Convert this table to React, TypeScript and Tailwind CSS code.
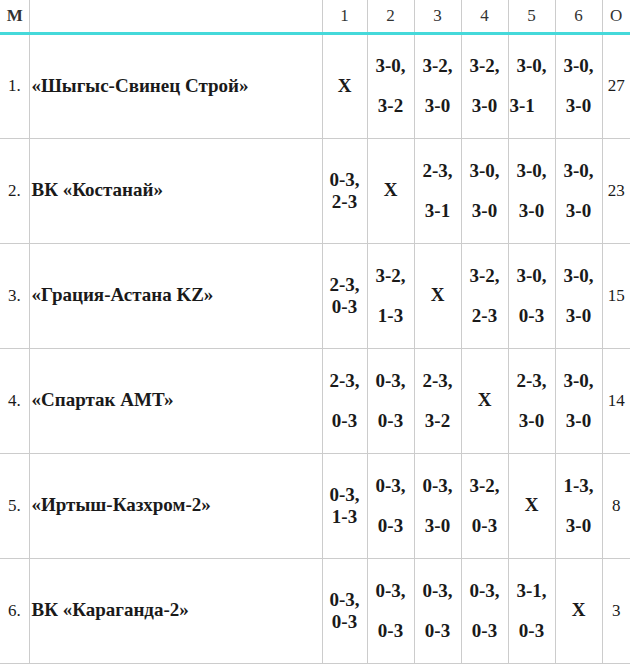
type Score = { top: string; bottom?: string; tight?: boolean; leftBottom?: boolean };

interface Team {
  n: number;
  name: string;
  cells: (Score | null)[];
  points: number;
}

const sp = (top: string, bottom: string): Score => ({ top, bottom });
const tt = (top: string, bottom: string): Score => ({ top, bottom, tight: true });

const teams: Team[] = [
  {
    n: 1,
    name: '«Шыгыс-Свинец Строй»',
    cells: [null, sp('3-0,', '3-2'), sp('3-2,', '3-0'), sp('3-2,', '3-0'), { top: '3-0,', bottom: '3-1', leftBottom: true }, sp('3-0,', '3-0')],
    points: 27,
  },
  {
    n: 2,
    name: 'ВК «Костанай»',
    cells: [tt('0-3,', '2-3'), null, sp('2-3,', '3-1'), sp('3-0,', '3-0'), sp('3-0,', '3-0'), sp('3-0,', '3-0')],
    points: 23,
  },
  {
    n: 3,
    name: '«Грация-Астана KZ»',
    cells: [tt('2-3,', '0-3'), sp('3-2,', '1-3'), null, sp('3-2,', '2-3'), sp('3-0,', '0-3'), sp('3-0,', '3-0')],
    points: 15,
  },
  {
    n: 4,
    name: '«Спартак АМТ»',
    cells: [sp('2-3,', '0-3'), sp('0-3,', '0-3'), sp('2-3,', '3-2'), null, sp('2-3,', '3-0'), sp('3-0,', '3-0')],
    points: 14,
  },
  {
    n: 5,
    name: '«Иртыш-Казхром-2»',
    cells: [tt('0-3,', '1-3'), sp('0-3,', '0-3'), sp('0-3,', '3-0'), sp('3-2,', '0-3'), null, sp('1-3,', '3-0')],
    points: 8,
  },
  {
    n: 6,
    name: 'ВК «Караганда-2»',
    cells: [tt('0-3,', '0-3'), sp('0-3,', '0-3'), sp('0-3,', '0-3'), sp('0-3,', '0-3'), sp('3-1,', '0-3'), null],
    points: 3,
  },
];

function ScoreCell({ score }: { score: Score | null }) {
  if (score == null) {
    return <span className="text-[19px] font-bold">X</span>;
  }
  if (score.tight) {
    return (
      <div className="flex flex-col items-center text-[19px] font-bold leading-[22px]">
        <span>{score.top}</span>
        <span>{score.bottom}</span>
      </div>
    );
  }
  return (
    <div className="flex w-full flex-col gap-[20px] text-[19px] font-bold leading-[20px]">
      <span className="text-center">{score.top}</span>
      <span className={score.leftBottom ? 'pl-[1px] text-left' : 'text-center'}>{score.bottom}</span>
    </div>
  );
}

export default function App() {
  return (
    <div className="h-[665px] w-[630px] overflow-hidden bg-white font-serif text-[#1a1a1a]">
      <table className="w-[630px] table-fixed border-collapse font-['Liberation_Serif']">
        <colgroup>
          <col className="w-[29px]" />
          <col className="w-[293px]" />
          <col className="w-[45px]" />
          <col className="w-[47px]" />
          <col className="w-[47px]" />
          <col className="w-[47px]" />
          <col className="w-[47px]" />
          <col className="w-[47px]" />
          <col className="w-[28px]" />
        </colgroup>
        <thead>
          <tr className="h-[33px] border-b-[3px] border-[#45d9da] text-[17px] text-[#333]">
            <th className="border-r border-[#cccccc] pl-[1px] text-center font-bold">М</th>
            <th className="border-r border-[#cccccc]" />
            {[1, 2, 3, 4, 5, 6].map((i) => (
              <th key={i} className="border-r border-[#cccccc] text-center font-normal">
                {i}
              </th>
            ))}
            <th className="text-center font-normal">О</th>
          </tr>
        </thead>
        <tbody>
          {teams.map((team) => (
            <tr key={team.n} className="h-[105px] border-b border-[#cccccc]">
              <td className="border-r border-[#cccccc] pl-[8px] text-[17px]">{team.n}.</td>
              <td className="border-r border-[#cccccc] pl-[2px] text-[19px] font-bold">{team.name}</td>
              {team.cells.map((cell, i) => (
                <td key={i} className="border-r border-[#cccccc] text-center align-middle">
                  <div className="flex justify-center">
                    <ScoreCell score={cell} />
                  </div>
                </td>
              ))}
              <td className="text-center text-[17px]">{team.points}</td>
            </tr>
          ))}
        </tbody>
      </table>
    </div>
  );
}
